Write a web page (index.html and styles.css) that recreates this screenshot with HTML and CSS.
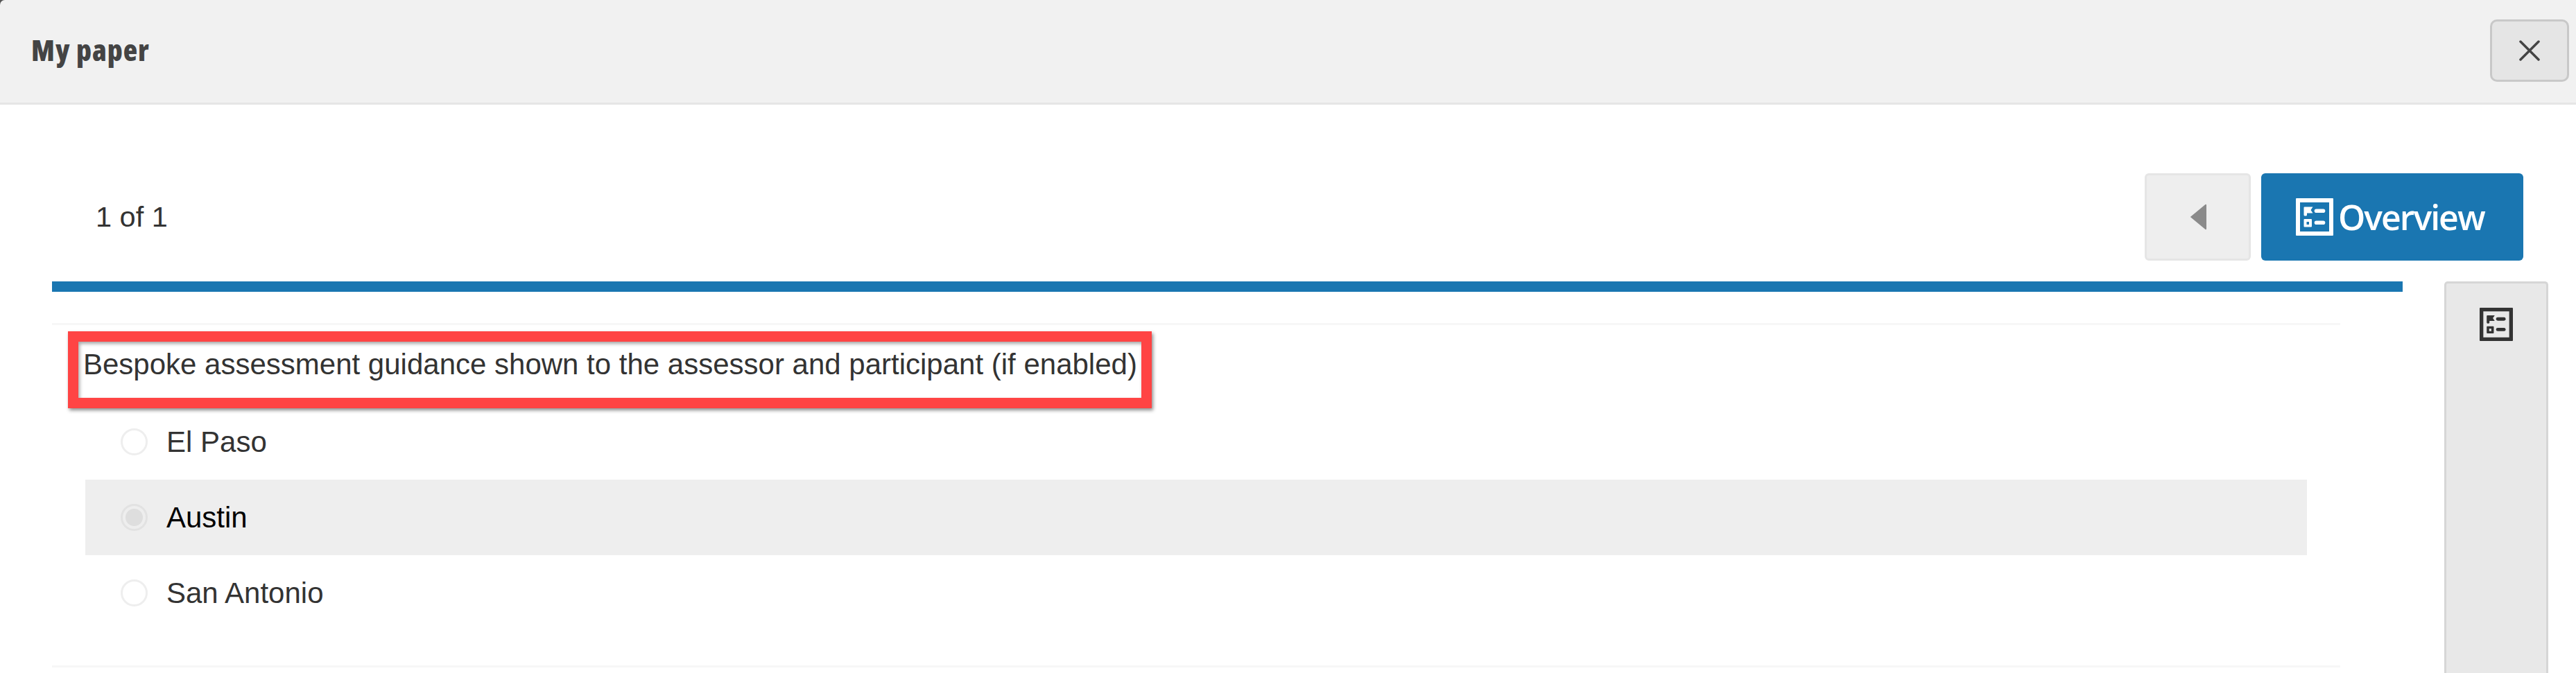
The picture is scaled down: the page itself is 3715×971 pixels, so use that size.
FILE: index.html
```html
<!DOCTYPE html>
<html lang="en">
<head>
<meta charset="utf-8">
<title>My paper</title>
<link rel="stylesheet" href="styles.css">
</head>
<body>
<svg class="defs" width="0" height="0" aria-hidden="true">
  <symbol id="overview" viewBox="0 0 54 54">
    <path fill="currentColor" fill-rule="evenodd" d="M0 1a1 1 0 0 1 1-1h52a1 1 0 0 1 1 1v52a1 1 0 0 1-1 1H1a1 1 0 0 1-1-1zM6 6v42h42V6z"/>
    <path fill="currentColor" d="M11.5 13.5a1 1 0 0 1 1-1H24.5L21.5 17l3 4.5H16V24a1.5 1.5 0 0 1-1.5 1.5H13A1.5 1.5 0 0 1 11.5 24z"/>
    <rect fill="currentColor" x="26.7" y="15.5" width="15.6" height="5.6" rx="2.8"/>
    <path fill="currentColor" fill-rule="evenodd" d="M11.5 31a1 1 0 0 1 1-1h9.500a1 1 0 0 1 1 1v9.500a1 1 0 0 1-1 1H12.500a1 1 0 0 1-1-1zM15.500 34v4h3.500v-4z"/>
    <rect fill="currentColor" x="26.7" y="32.500" width="15.6" height="5.600" rx="2.800"/>
  </symbol>
</svg>
<div class="page">
  <header class="head">
    <h1 class="title">My paper</h1>
    <button class="close" type="button" aria-label="Close">
      <svg width="30" height="30" viewBox="0 0 30 30"><path d="M2 2 28 28M28 2 2 28" fill="none" stroke="#444" stroke-width="3.500" stroke-linecap="round"/></svg>
    </button>
  </header>
  <main class="content">
    <div class="toolbar">
      <span class="count">1 of 1</span>
      <div class="actions">
        <button class="prev" type="button" aria-label="Previous">
          <svg width="24" height="38" viewBox="0 0 24 38"><path d="M22.500 1 0.800 19 22.500 37a1 1 0 0 0 1.500-1V2a1 1 0 0 0-1.500-1z" fill="#8a8a8a"/></svg>
        </button>
        <button class="overview" type="button">
          <svg class="ov-icon" width="54" height="54"><use href="#overview"/></svg>
          <span>Overview</span>
        </button>
      </div>
    </div>
    <div class="work">
      <section class="main">
        <div class="progress"></div>
        <div class="paper">
          <div class="question"><p>Bespoke assessment guidance shown to the assessor and participant (if enabled)</p></div>
          <div class="options">
            <div class="option"><span class="radio"></span><span>El Paso</span></div>
            <div class="option selected"><span class="radio"></span><span>Austin</span></div>
            <div class="option"><span class="radio"></span><span>San Antonio</span></div>
          </div>
        </div>
      </section>
      <aside class="side">
        <svg class="side-icon" width="48" height="48"><use href="#overview"/></svg>
      </aside>
    </div>
  </main>
</div>
</body>
</html>
```
FILE: styles.css
```css
* { box-sizing: border-box; }
html, body { margin: 0; height: 100%; overflow: hidden; }
body { background: #fff; font-family: "Liberation Sans", Arial, sans-serif; color: #333; }
.defs { display: block; height: 0; }
.page { height: 971px; background: #555; display: flex; flex-direction: column; }

.head {
  height: 151px;
  flex: none;
  display: flex;
  justify-content: space-between;
  align-items: flex-start;
  padding: 28px 10px 0 45px;
  background: #f1f1f1;
  border-bottom: 3px solid #e6e6e6;
  border-top-left-radius: 7px;
}
.title {
  margin: 0;
  padding-top: 19px;
  font: 800 42px/50px "Open Sans", sans-serif;
  font-stretch: 75%;
  letter-spacing: 1px;
  color: #444;
}
.close {
  width: 114px;
  height: 90px;
  padding: 0;
  display: flex;
  align-items: center;
  justify-content: center;
  background: #e5e5e5;
  border: 3px solid #c8c8c8;
  border-radius: 10px;
}

.content { flex: 1; background: #fff; display: flex; flex-direction: column; }
.toolbar {
  display: flex;
  justify-content: space-between;
  align-items: flex-start;
  padding: 99px 76px 30px 138px;
}
.count { font-size: 41.5px; line-height: 126px; color: #333; }
.actions { display: flex; gap: 15px; }
.prev {
  width: 153px;
  height: 126px;
  padding: 0;
  display: flex;
  align-items: center;
  justify-content: center;
  background: #eee;
  border: 3px solid #e5e5e5;
  border-radius: 6px;
}
.overview {
  width: 378px;
  height: 126px;
  padding: 0 0 0 50px;
  display: flex;
  align-items: center;
  gap: 7px;
  background: #1a76b1;
  border: 0;
  border-radius: 6px;
  color: #fff;
  font: 600 50px/54px "Open Sans", sans-serif;
  letter-spacing: -2px;
}
.ov-icon { flex: none; }

.work { flex: 1; display: flex; padding-left: 75px; }
.main { width: 3390px; }
.progress { height: 15px; background: #1a76b1; }
.paper {
  width: 3300px;
  height: 497px;
  margin-top: 45px;
  padding-top: 9px;
  border-top: 3px solid #f7f7f7;
  border-bottom: 3px solid #f7f7f7;
}
.question {
  width: 1563px;
  height: 111px;
  margin-left: 23px;
  padding: 8px 0 0 7px;
  border: 15px solid #ff4444;
  box-shadow: 2px 3px 5px rgba(0, 0, 0, .45), inset 2px 3px 5px rgba(0, 0, 0, .35);
}
.question p { margin: 0; font-size: 42px; line-height: 50px; color: #333; white-space: nowrap; }
.options { margin: -6px 48px 0; }
.option {
  height: 109px;
  width: 3204px;
  display: flex;
  align-items: center;
  gap: 27px;
  padding-left: 51px;
  font-size: 42px;
  color: #333;
}
.option.selected { background: #eee; color: #000; }
.radio {
  width: 39px;
  height: 39px;
  flex: none;
  border: 3px solid #eee;
  border-radius: 50%;
  background: #fff;
}
.option.selected .radio {
  border-color: #e2e2e2;
  background: radial-gradient(circle, #dedede 0 12px, #eee 13px);
}

.side {
  width: 150px;
  height: 565px;
  margin-left: 60px;
  padding-top: 35px;
  display: flex;
  justify-content: center;
  align-items: flex-start;
  background: #e8e8e8;
  border: 3px solid #d6d6d6;
  border-bottom: 0;
  border-radius: 5px 5px 0 0;
  color: #333;
}
```
